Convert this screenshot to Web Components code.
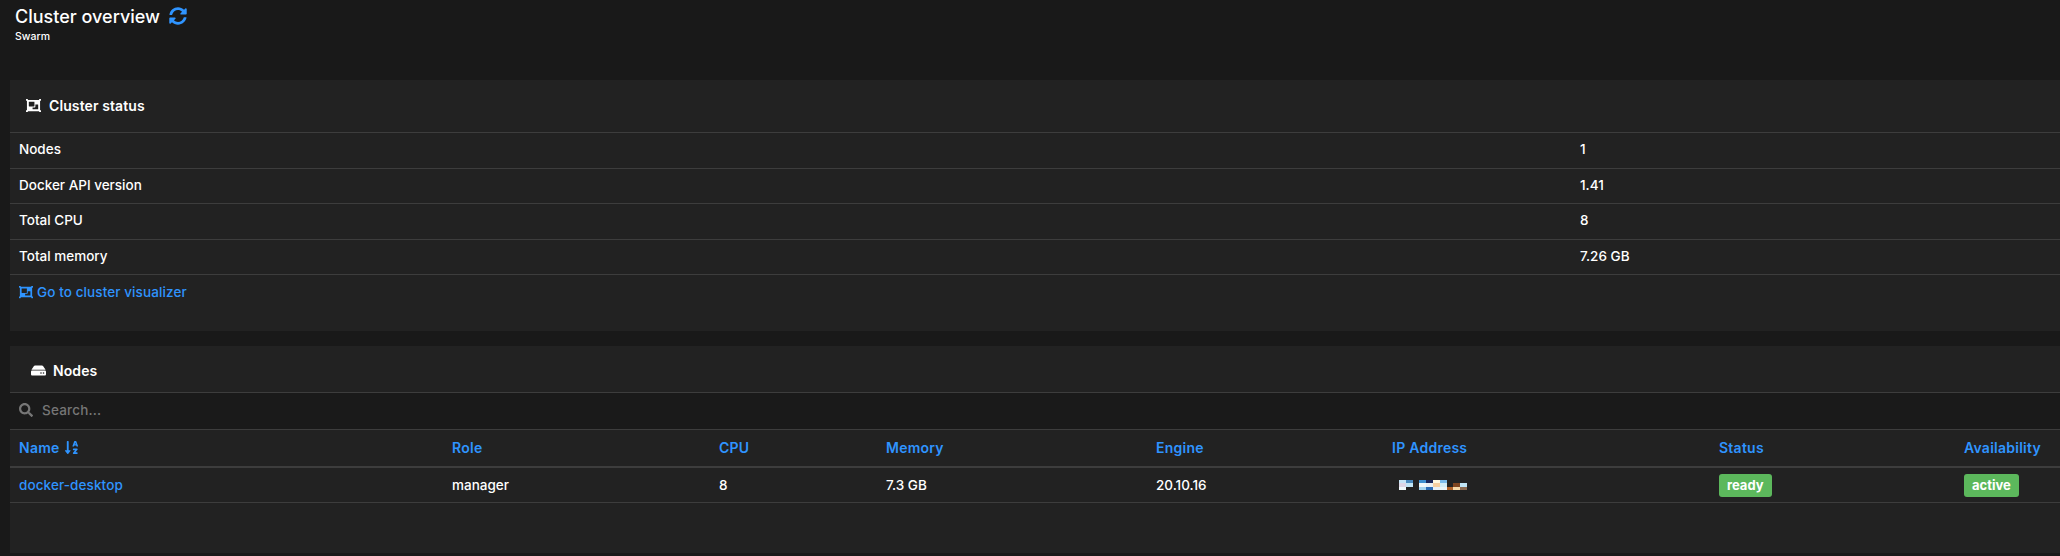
<!DOCTYPE html>
<html>
<head>
<meta charset="utf-8">
<title>Cluster overview</title>
<style>
  html, body { margin: 0; height: 556px; overflow: hidden; background: #191919; }
  body { color: #fff; font-family: Inter, "Liberation Sans", sans-serif; font-size: 13.5px; font-weight: 500; }
  app-card { margin-left: 10px; }
  #status { height: 251px; margin-bottom: 15px; }
  #nodes { height: 207px; }
</style>
</head>
<body>
<page-header title="Cluster overview" sub="Swarm"></page-header>

<app-card id="status">
  <ui-icon slot="icon" name="group"></ui-icon>
  <span slot="title">Cluster status</span>
  <status-table></status-table>
</app-card>

<app-card id="nodes" compact>
  <ui-icon slot="icon" name="hdd"></ui-icon>
  <span slot="title">Nodes</span>
  <search-bar placeholder="Search..."></search-bar>
  <nodes-table></nodes-table>
</app-card>

<script>
const ICONS = {
  sync: ['0 0 512 512', 'M370.72 133.28C339.458 104.008 298.888 87.962 255.848 88c-77.458.068-144.328 53.178-162.791 126.85-1.344 5.363-6.122 9.15-11.651 9.15H24.103c-7.498 0-13.194-6.807-11.807-14.176C33.933 94.924 134.813 8 256 8c66.448 0 126.791 26.136 171.315 68.685L463.03 40.97C478.149 25.851 504 36.559 504 57.941V192c0 13.255-10.745 24-24 24H345.941c-21.382 0-32.09-25.851-16.971-40.971l41.75-41.749zM32 296h134.059c21.382 0 32.09 25.851 16.971 40.971l-41.75 41.75c31.262 29.273 71.835 45.319 114.876 45.28 77.418-.07 144.315-53.144 162.787-126.849 1.344-5.363 6.122-9.15 11.651-9.15h57.304c7.498 0 13.194 6.807 11.807 14.176C478.067 417.076 377.187 504 256 504c-66.448 0-126.791-26.136-171.315-68.685L48.97 471.03C33.851 486.149 8 475.441 8 454.059V320c0-13.255 10.745-24 24-24z'],
  group: ['0 0 512 512', 'M480 128V96h20c6.627 0 12-5.373 12-12V44c0-6.627-5.373-12-12-12h-40c-6.627 0-12 5.373-12 12v20H64V44c0-6.627-5.373-12-12-12H12C5.373 32 0 37.373 0 44v40c0 6.627 5.373 12 12 12h20v320H12c-6.627 0-12 5.373-12 12v40c0 6.627 5.373 12 12 12h40c6.627 0 12-5.373 12-12v-20h384v20c0 6.627 5.373 12 12 12h40c6.627 0 12-5.373 12-12v-40c0-6.627-5.373-12-12-12h-20V128zM96 276V140c0-6.627 5.373-12 12-12h168c6.627 0 12 5.373 12 12v136c0 6.627-5.373 12-12 12H108c-6.627 0-12-5.373-12-12zm320 96c0 6.627-5.373 12-12 12H236c-6.627 0-12-5.373-12-12v-52h72c13.255 0 24-10.745 24-24v-72h84c6.627 0 12 5.373 12 12v136z'],
  hdd: ['0 0 576 512', 'M576 304v96c0 26.51-21.49 48-48 48H48c-26.51 0-48-21.49-48-48v-96c0-26.51 21.49-48 48-48h480c26.51 0 48 21.49 48 48zm-48-80a79.557 79.557 0 0 1 30.777 6.165L462.25 85.374A48.003 48.003 0 0 0 422.311 64H153.689a48 48 0 0 0-39.938 21.374L17.223 230.165A79.557 79.557 0 0 1 48 224h480zm-48 96c-17.673 0-32 14.327-32 32s14.327 32 32 32 32-14.327 32-32-14.327-32-32-32zm-96 0c-17.673 0-32 14.327-32 32s14.327 32 32 32 32-14.327 32-32-14.327-32-32-32z'],
  search: ['0 0 512 512', 'M505 442.7L405.3 343c-4.5-4.5-10.6-7-17-7H372c27.6-35.3 44-79.7 44-128C416 93.1 322.9 0 208 0S0 93.1 0 208s93.1 208 208 208c48.3 0 92.7-16.4 128-44v16.3c0 6.4 2.5 12.5 7 17l99.7 99.7c9.4 9.4 24.6 9.4 33.9 0l28.3-28.3c9.4-9.4 9.4-24.6.1-34zM208 336c-70.7 0-128-57.2-128-128 0-70.7 57.2-128 128-128 70.7 0 128 57.2 128 128 0 70.7-57.2 128-128 128z'],
  sort: ['0 0 448 512', 'M176 352h-48V48a16 16 0 0 0-16-16H80a16 16 0 0 0-16 16v304H16c-14.19 0-21.36 17.24-11.29 27.31l80 96a16 16 0 0 0 22.62 0l80-96C197.35 369.26 190.22 352 176 352zm240-64H288a16 16 0 0 0-16 16v32a16 16 0 0 0 16 16h56l-61.26 70.45A32 32 0 0 0 272 446.37V464a16 16 0 0 0 16 16h128a16 16 0 0 0 16-16v-32a16 16 0 0 0-16-16h-56l61.26-70.45A32 32 0 0 0 432 321.63V304a16 16 0 0 0-16-16zm31.06-85.38l-59.27-160A16 16 0 0 0 372.72 32h-41.44a16 16 0 0 0-15.07 10.62l-59.27 160A16 16 0 0 0 272 224h24.83a16 16 0 0 0 15.29-11.31L321.1 184h61.8l9 28.69A16 16 0 0 0 407.17 224H432a16 16 0 0 0 15.06-21.38zM335.61 144L352 96l16.39 48z']
};

class UiIcon extends HTMLElement {
  connectedCallback() {
    const [box, d] = ICONS[this.getAttribute('name')];
    const root = this.shadowRoot || this.attachShadow({ mode: 'open' });
    root.innerHTML = `
      <style>
        :host { display: inline-flex; width: 1em; height: 1em; flex: none; }
        svg { width: 100%; height: 100%; fill: currentColor; display: block; }
      </style>
      <svg viewBox="${box}"><path d="${d}"/></svg>`;
  }
}

class PageHeader extends HTMLElement {
  connectedCallback() {
    const root = this.shadowRoot || this.attachShadow({ mode: 'open' });
    root.innerHTML = `
      <style>
        :host { display: block; height: 80px; padding: 3px 0 0 15px; box-sizing: border-box; }
        .title { display: flex; align-items: center; gap: 9px; font-size: 18px; height: 26px; }
        ui-icon { color: #2f94ff; font-size: 18px; }
        .sub { font-size: 10.5px; margin-top: 1px; }
      </style>
      <div class="title">${this.getAttribute('title')} <ui-icon name="sync"></ui-icon></div>
      <div class="sub">${this.getAttribute('sub')}</div>`;
  }
}

class AppCard extends HTMLElement {
  connectedCallback() {
    const root = this.shadowRoot || this.attachShadow({ mode: 'open' });
    root.innerHTML = `
      <style>
        :host { display: block; background: #222; overflow: hidden; }
        header {
          display: flex; align-items: center; gap: 8px;
          height: 53px; box-sizing: border-box; padding: 0 0 2px 16px;
          border-bottom: 1px solid #3d3d3d;
          font-size: 14px; font-weight: 600; letter-spacing: .1px;
        }
        :host([compact]) header { height: 47px; padding: 2px 0 0 21px; gap: 7px; }
        ::slotted(ui-icon) { font-size: 15px; }
      </style>
      <header><slot name="icon"></slot><slot name="title"></slot></header>
      <slot></slot>`;
  }
}

class StatusTable extends HTMLElement {
  connectedCallback() {
    const rows = [
      ['Nodes', '1'],
      ['Docker API version', '1.41'],
      ['Total CPU', '8'],
      ['Total memory', '7.26 GB']
    ];
    const root = this.shadowRoot || this.attachShadow({ mode: 'open' });
    root.innerHTML = `
      <style>
        :host { display: block; }
        .row {
          display: grid; grid-template-columns: 1561px 1fr; align-items: center;
          height: 35.5px; box-sizing: border-box; padding: 0 0 2px 9px;
          border-bottom: 1px solid #3d3d3d;
        }
        a {
          display: flex; align-items: center; gap: 4px; color: #2f94ff;
          text-decoration: none; padding: 9px 0 0 9px; letter-spacing: .1px;
        }
        ui-icon { font-size: 14px; }
      </style>
      ${rows.map(([k, v]) => `<div class="row"><span>${k}</span><span>${v}</span></div>`).join('')}
      <a href="#"><ui-icon name="group"></ui-icon>Go to cluster visualizer</a>`;
  }
}

class SearchBar extends HTMLElement {
  connectedCallback() {
    const root = this.shadowRoot || this.attachShadow({ mode: 'open' });
    root.innerHTML = `
      <style>
        :host {
          display: flex; align-items: center; gap: 9px; height: 37px;
          box-sizing: border-box; padding: 0 0 2px 9px; letter-spacing: .2px;
          background: #1a1a1a; border-bottom: 1px solid #3d3d3d; color: #767676;
        }
        ui-icon { font-size: 14px; }
      </style>
      <ui-icon name="search"></ui-icon><span>${this.getAttribute('placeholder')}</span>`;
  }
}

class StatusBadge extends HTMLElement {
  connectedCallback() {
    const root = this.shadowRoot || this.attachShadow({ mode: 'open' });
    root.innerHTML = `
      <style>
        :host {
          display: inline-flex; align-items: center; justify-content: center;
          height: 23px; padding: 0 8px; box-sizing: border-box; border-radius: 3px;
          background: #5cb85c; color: #fff; font-size: 13px; font-weight: 700;
        }
      </style>
      <slot></slot>`;
  }
}

class MaskedAddress extends HTMLElement {
  connectedCallback() {
    const cols = [
      ['#c5e5f7', '#ddd5e5', '#f0fafc'], ['#4a8ac0', '#c0e4f5', '#222222'],
      null,
      ['#3d8fd0', '#f0f8fb', '#a4d4f0'], ['#1a2558', '#e8f0f5', '#2b6cb5'],
      ['#fff8e0', '#f6cfa0', '#e8f0f5'], ['#7abcee', '#d0ecf8', '#e8f5fb'],
      ['#222222', '#222222', '#b0622a'], ['#222222', '#7e4520', '#f5d8a8'],
      ['#222222', '#c0e4f5', '#8a6a52']
    ];
    const cells = cols.map((col, x) => col ? col.map((fill, y) =>
      `<rect x="${x * 6.8}" y="${y * 3.4}" width="6.8" height="3.4" fill="${fill}"/>`).join('') : '').join('');
    const root = this.shadowRoot || this.attachShadow({ mode: 'open' });
    root.innerHTML = `
      <style>:host { display: inline-block; height: 10px; margin-left: 7px; } svg { display: block; }</style>
      <svg width="68" height="10" viewBox="0 0 68 10.2" preserveAspectRatio="none" shape-rendering="crispEdges">${cells}</svg>`;
  }
}

class NodesTable extends HTMLElement {
  connectedCallback() {
    const heads = ['Name', 'Role', 'CPU', 'Memory', 'Engine', 'IP Address', 'Status', 'Availability'];
    const root = this.shadowRoot || this.attachShadow({ mode: 'open' });
    root.innerHTML = `
      <style>
        :host { display: block; }
        .row {
          display: grid; align-items: center; padding-left: 9px; box-sizing: border-box;
          grid-template-columns: 433px 267px 167px 270px 236px 327px 245px 1fr;
        }
        .head {
          height: 38px; padding-bottom: 2px; border-bottom: 2px solid #3d3d3d;
          color: #2f94ff; font-weight: 600; font-size: 14px; letter-spacing: .25px;
        }
        .head span { display: flex; align-items: center; gap: 4px; }
        .body { height: 35px; border-bottom: 1px solid #3d3d3d; }
        a { color: #2f94ff; text-decoration: none; letter-spacing: .1px; }
        ui-icon { font-size: 15px; }
      </style>
      <div class="row head">
        ${heads.map((h, i) => `<span>${h}${i === 0 ? '<ui-icon name="sort"></ui-icon>' : ''}</span>`).join('')}
      </div>
      <div class="row body">
        <span><a href="#">docker-desktop</a></span>
        <span>manager</span>
        <span>8</span>
        <span>7.3 GB</span>
        <span>20.10.16</span>
        <span><masked-address></masked-address></span>
        <span><status-badge>ready</status-badge></span>
        <span><status-badge>active</status-badge></span>
      </div>`;
  }
}

customElements.define('ui-icon', UiIcon);
customElements.define('page-header', PageHeader);
customElements.define('app-card', AppCard);
customElements.define('status-table', StatusTable);
customElements.define('search-bar', SearchBar);
customElements.define('status-badge', StatusBadge);
customElements.define('masked-address', MaskedAddress);
customElements.define('nodes-table', NodesTable);
</script>
</body>
</html>
